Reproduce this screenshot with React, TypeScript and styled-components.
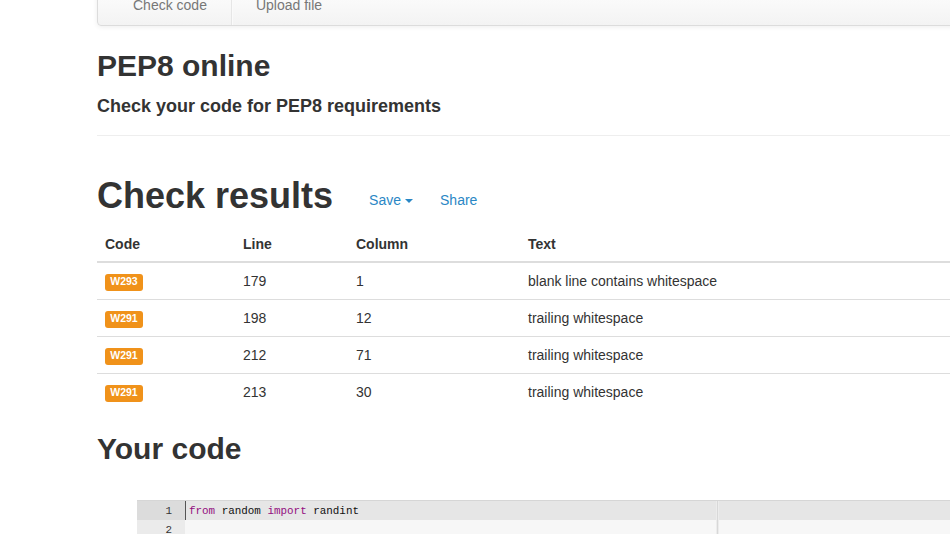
import styled, { createGlobalStyle } from 'styled-components';

const GlobalStyle = createGlobalStyle`
  html, body {
    margin: 0;
    padding: 0;
    background: #fff;
    overflow: hidden;
  }
  body {
    font-family: "Liberation Sans", Arial, Helvetica, sans-serif;
    font-size: 14px;
    line-height: 1.42857;
    color: #333;
  }
`;

const palette = {
  text: '#333',
  link: '#2a87c5',
  border: '#ddd',
  warning: '#f0921a',
  keyword: 'rgb(147, 15, 128)',
};

const Container = styled.div`
  width: 1140px;
  margin-left: 97px;
`;

const Navbar = styled.nav`
  display: flex;
  height: 44px;
  margin-top: -20px;
  margin-bottom: 23px;
  padding-left: 11px;
  border: 1px solid #dcdcdc;
  border-radius: 4px;
  background-image: linear-gradient(to bottom, #fff 0%, #f3f3f3 100%);
  box-shadow: inset 0 1px 0 rgba(255, 255, 255, 0.15), 0 1px 5px rgba(0, 0, 0, 0.075);
`;

const NavItem = styled.a<{ $divider?: boolean }>`
  padding: 14px 24px 0;
  line-height: 20px;
  color: #777;
  text-decoration: none;
  border-right: ${p => (p.$divider ? '1px solid #e6e6e6' : 'none')};
  box-shadow: ${p => (p.$divider ? '1px 0 0 #fafafa' : 'none')};
`;

const Title = styled.h2`
  margin: 0 0 10px;
  font-size: 30px;
  font-weight: bold;
  line-height: 1.1;
`;

const Subtitle = styled.h4`
  margin: 15px 0 0;
  font-size: 18px;
  font-weight: bold;
  line-height: 1.1;
`;

const Rule = styled.hr`
  margin: 18px 0 0;
  border: 0;
  border-top: 1px solid #eee;
`;

const ResultsHeader = styled.div`
  display: flex;
  align-items: baseline;
  margin-top: 40px;
`;

const BigTitle = styled.h1`
  margin: 0;
  font-size: 36px;
  font-weight: bold;
  line-height: 1.1;
`;

const Actions = styled.div`
  display: flex;
  gap: 27px;
  margin-left: 36px;
  position: relative;
  top: -3px;
`;

const ActionLink = styled.a`
  display: flex;
  align-items: center;
  gap: 4px;
  color: ${palette.link};
  text-decoration: none;
  font-size: 14px;
`;

const Caret = styled.span`
  width: 0;
  height: 0;
  border-top: 4px solid ${palette.link};
  border-left: 4px solid transparent;
  border-right: 4px solid transparent;
`;

const Table = styled.table`
  width: 100%;
  margin-top: 11px;
  table-layout: fixed;
  border-collapse: collapse;
  border-spacing: 0;
`;

const HeadCell = styled.th<{ $w?: number }>`
  box-sizing: border-box;
  width: ${p => (p.$w ? `${p.$w}px` : 'auto')};
  padding: 8px 8px 7px;
  line-height: 20px;
  text-align: left;
  font-weight: bold;
  border-bottom: 2px solid ${palette.border};
`;

const Cell = styled.td`
  padding: 8px;
  line-height: 20px;
  border-top: 1px solid ${palette.border};
  vertical-align: top;
`;

const Label = styled.span`
  display: inline-block;
  padding: 0.2em 0.5em 0.35em;
  font-size: 10.5px;
  font-weight: bold;
  line-height: 1;
  color: #fff;
  background: ${palette.warning};
  border-radius: 3px;
  vertical-align: 1px;
`;

const SectionTitle = styled.h2`
  margin: 22px 0 0;
  font-size: 30px;
  font-weight: bold;
  line-height: 1.1;
`;

const Editor = styled.div`
  position: relative;
  margin: 35px 0 0 40px;
  border-top: 1px solid #d6d6d6;
  font-family: "Liberation Mono", "DejaVu Sans Mono", monospace;
  font-size: 10.9px;
  background: #f7f7f7;
`;

const EditorLine = styled.div<{ $active?: boolean }>`
  display: flex;
  height: 19px;
  line-height: 21px;
  background: ${p => (p.$active ? '#e6e6e6' : '#f7f7f7')};
`;

const Gutter = styled.div<{ $active?: boolean }>`
  width: 35px;
  padding-right: 13px;
  text-align: right;
  color: #333;
  background: ${p => (p.$active ? '#dcdcdc' : '#ebebeb')};
`;

const Code = styled.div<{ $cursor?: boolean }>`
  padding-left: 3px;
  color: #111;
  white-space: pre;
  border-left: ${p => (p.$cursor ? '1px solid #555' : '1px solid transparent')};
`;

const Keyword = styled.span`
  color: ${palette.keyword};
`;

const PrintMargin = styled.div`
  position: absolute;
  top: 0;
  bottom: 0;
  left: 580px;
  width: 1px;
  background: #d8d8d8;
  box-shadow: 1px 0 0 #ececec, -1px 0 0 #ececec;
`;

const results = [
  { code: 'W293', line: 179, column: 1, text: 'blank line contains whitespace' },
  { code: 'W291', line: 198, column: 12, text: 'trailing whitespace' },
  { code: 'W291', line: 212, column: 71, text: 'trailing whitespace' },
  { code: 'W291', line: 213, column: 30, text: 'trailing whitespace' },
];

export default function App() {
  return (
    <>
      <GlobalStyle />
      <Container>
        <Navbar>
          <NavItem $divider>Check code</NavItem>
          <NavItem>Upload file</NavItem>
        </Navbar>

        <Title>PEP8 online</Title>
        <Subtitle>Check your code for PEP8 requirements</Subtitle>
        <Rule />

        <ResultsHeader>
          <BigTitle>Check results</BigTitle>
          <Actions>
            <ActionLink>
              Save <Caret />
            </ActionLink>
            <ActionLink>Share</ActionLink>
          </Actions>
        </ResultsHeader>

        <Table>
          <thead>
            <tr>
              <HeadCell $w={138}>Code</HeadCell>
              <HeadCell $w={113}>Line</HeadCell>
              <HeadCell $w={172}>Column</HeadCell>
              <HeadCell>Text</HeadCell>
            </tr>
          </thead>
          <tbody>
            {results.map(r => (
              <tr key={`${r.line}-${r.column}`}>
                <Cell>
                  <Label>{r.code}</Label>
                </Cell>
                <Cell>{r.line}</Cell>
                <Cell>{r.column}</Cell>
                <Cell>{r.text}</Cell>
              </tr>
            ))}
          </tbody>
        </Table>

        <SectionTitle>Your code</SectionTitle>

        <Editor>
          <EditorLine $active>
            <Gutter $active>1</Gutter>
            <Code $cursor>
              <Keyword>from</Keyword> random <Keyword>import</Keyword> randint
            </Code>
          </EditorLine>
          <EditorLine>
            <Gutter>2</Gutter>
            <Code> </Code>
          </EditorLine>
          <PrintMargin />
        </Editor>
      </Container>
    </>
  );
}
